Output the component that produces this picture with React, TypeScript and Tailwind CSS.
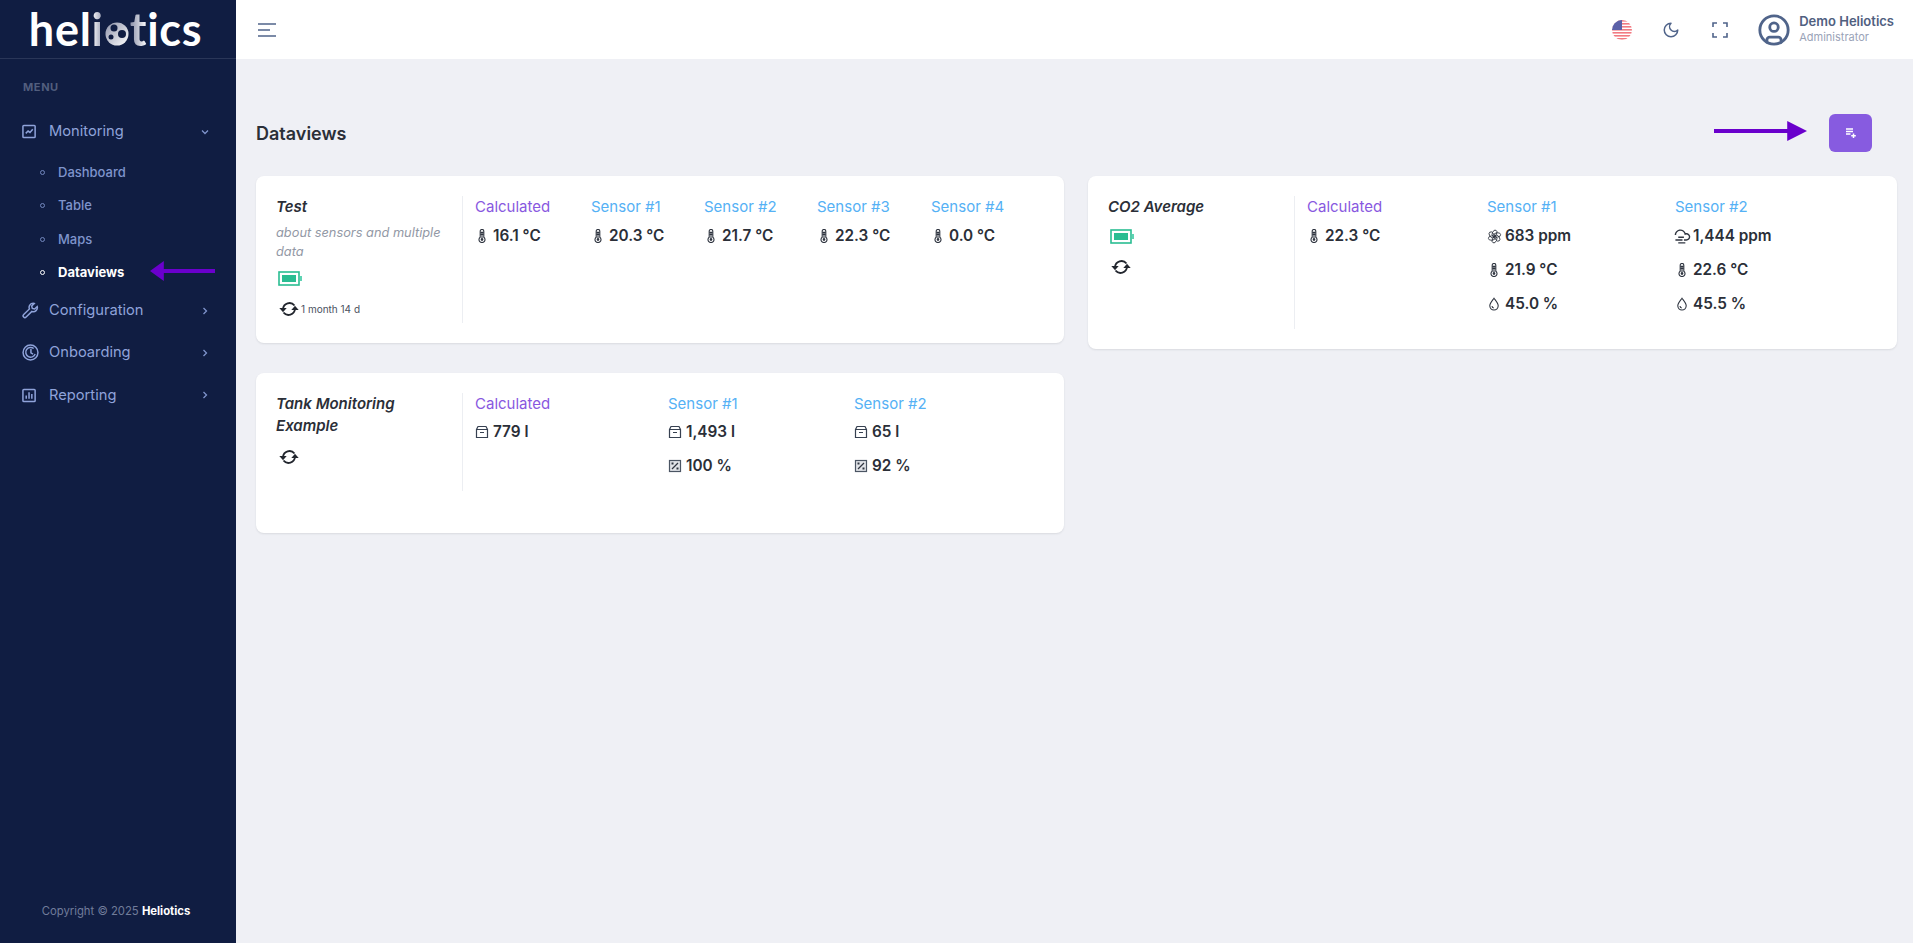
import { ReactNode } from "react";
import { RiCloudWindyLine } from "react-icons/ri";
import { LuCircleUser, LuMoon } from "react-icons/lu";

type Reading = { icon: ReactNode; value: string };
type Column = { label: string; accent?: boolean; readings: Reading[] };

const Thermo = (
  <svg viewBox="0 0 14 14" className="h-[14px] w-[14px] text-[#2f3540]" fill="none" stroke="currentColor" strokeWidth="1.1">
    <path d="M5.2 8.2V2.2a1.8 1.8 0 0 1 3.6 0v6a3 3 0 1 1-3.6 0z" />
    <path d="M7 4v6M5.4 3.4h3.2M5.4 5.4h3.2" />
    <circle cx="7" cy="10.6" r="1.3" fill="currentColor" stroke="none" />
  </svg>
);

const Drop = (
  <svg viewBox="0 0 14 14" className="h-[14px] w-[14px] text-[#2f3540]" fill="none" stroke="currentColor" strokeWidth="1.1">
    <path d="M7 1.2C5 4 2.8 6.2 2.8 8.8a4.2 4.2 0 0 0 8.4 0C11.2 6.2 9 4 7 1.2z" />
    <path d="M5 9a2.2 2.2 0 0 0 1.8 2" />
  </svg>
);

const Gas = (
  <svg viewBox="0 0 16 16" className="h-[15px] w-[15px] shrink-0 text-[#2f3540]" fill="none" stroke="currentColor" strokeWidth="0.9">
    {[0, 60, 120, 180, 240, 300].map((deg) => (
      <ellipse key={deg} cx="8" cy="4.6" rx="2.3" ry="3.6" transform={`rotate(${deg} 8 8) rotate(25 8 4.6)`} />
    ))}
  </svg>
);

const Cloud = <RiCloudWindyLine className="h-[17px] w-[17px] shrink-0 text-[#2f3540]" />;

const Tank = (
  <svg viewBox="0 0 14 14" className="h-[14px] w-[14px] text-[#374151]" fill="none" stroke="currentColor" strokeWidth="1.2">
    <path d="M3 1.5h8l1.5 3V12.5h-11V4.5z" />
    <path d="M1.5 4.5h11M5 7.5h4" />
  </svg>
);

const Percent = (
  <svg viewBox="0 0 14 14" className="h-[14px] w-[14px]" fill="#e2e4e8" stroke="#4b5563" strokeWidth="1.2">
    <rect x="1.5" y="1.5" width="11" height="11" />
    <path d="M4 10l6-6" stroke="#2f3540" />
    <rect x="3.5" y="3.5" width="2" height="2" fill="#2f3540" stroke="none" />
    <rect x="8.5" y="8.5" width="2" height="2" fill="#2f3540" stroke="none" />
  </svg>
);

function Metric({ col, top = "mt-[7px]" }: { col: Column; top?: string }) {
  return (
    <div>
      <p className={`text-[15px] leading-[22px] ${col.accent ? "text-[#8858e0]" : "text-[#55b1f5]"}`}>{col.label}</p>
      <div className={`${top} space-y-[12px]`}>
        {col.readings.map((r) => (
          <div key={r.value} className="flex h-[22px] items-center gap-[4px] text-[15.3px] font-[560] text-[#2b2f38]">
            <span className="flex w-[14px] justify-center">{r.icon}</span>
            {r.value}
          </div>
        ))}
      </div>
    </div>
  );
}

function SyncIcon() {
  return (
    <svg viewBox="0 0 20 16" className="h-[16px] w-[20px] shrink-0 text-[#22262e]" fill="currentColor">
      <path d="M4 8A6.5 6.5 0 0 1 15.5 4.5" fill="none" stroke="currentColor" strokeWidth="1.9" />
      <path d="M16 8A6.5 6.5 0 0 1 4.5 11.5" fill="none" stroke="currentColor" strokeWidth="1.9" />
      <path d="M0.3 7h7.4L4 11.2z" />
      <path d="M12.3 9h7.4L16 4.8z" />
    </svg>
  );
}

function BatteryIcon({ className }: { className: string }) {
  return (
    <svg viewBox="0 0 24 15" className={`block h-[15px] w-[24px] ${className}`}>
      <rect x="1" y="1" width="20" height="13" fill="none" stroke="#2abd92" strokeWidth="1.6" />
      <rect x="4" y="4" width="14" height="7" fill="#2abd92" />
      <rect x="22" y="5" width="2" height="5" fill="#5fd3b3" />
    </svg>
  );
}

function Card({ children }: { children: ReactNode }) {
  return <div className="rounded-lg bg-white p-5 shadow-[0_1px_2px_rgba(56,65,74,0.12)]">{children}</div>;
}

const SideIcon = {
  chart: (
    <svg viewBox="0 0 16 16" className="h-[15px] w-[15px]" fill="none" stroke="currentColor" strokeWidth="1.6">
      <rect x="1" y="1.5" width="13" height="13" rx="1" />
      <path d="M4 10l2.5-2.5 2 1.5 3-3.5" />
    </svg>
  ),
  wrench: (
    <svg viewBox="0 0 16 16" className="h-[17px] w-[17px]" fill="none" stroke="currentColor" strokeWidth="1.4">
      <path d="M10.5 1.2a3.8 3.8 0 0 0-3.5 5.3L1.6 11.8a1.6 1.6 0 0 0 2.3 2.4l5.4-5.3a3.8 3.8 0 0 0 5-4.6l-2.4 2.3-2.2-.6-.6-2.2 2.4-2.4c-.3-.1-.6-.2-1-.2z" />
    </svg>
  ),
  coin: (
    <svg viewBox="0 0 16 16" className="h-[17px] w-[17px]" fill="none" stroke="currentColor" strokeWidth="1.4">
      <circle cx="8" cy="8" r="7" />
      <path d="M11 4.2A4.6 4.6 0 1 0 12.4 9.5" />
      <path d="M8.4 4.8v3.6l2 1.2" />
    </svg>
  ),
  bars: (
    <svg viewBox="0 0 16 16" className="h-[15px] w-[15px]" fill="none" stroke="currentColor" strokeWidth="1.6">
      <rect x="1" y="1.5" width="13" height="13" rx="1" />
      <path d="M4.5 11.5V8M7.5 11.5V4.5M10.5 11.5V6.5" />
    </svg>
  ),
};

function NavRow({ icon, label, open, h }: { icon: ReactNode; label: string; open?: boolean; h: string }) {
  return (
    <div className={`flex items-center pl-[22px] pr-[26px] ${h}`}>
      <span className="flex w-[27px] text-[#8fa3da]">{icon}</span>
      <span className="flex-1 text-[14.7px] text-[#8fa3da]">{label}</span>
      <svg viewBox="0 0 10 10" className="h-[10px] w-[10px] text-[#7f94cc]" fill="none" stroke="currentColor" strokeWidth="1.3">
        <path d={open ? "M2 3.5l3 3 3-3" : "M3.5 2l3 3-3 3"} />
      </svg>
    </div>
  );
}

function SubRow({ label, active }: { label: string; active?: boolean }) {
  return (
    <div className="flex h-[33.5px] items-center pl-[40px]">
      <span className={`h-[5px] w-[5px] rounded-full border ${active ? "border-white" : "border-[#7287bd]"}`} />
      <span className={`ml-[13px] text-[13px] ${active ? "font-bold text-white" : "font-medium text-[#7f94cc]"}`}>{label}</span>
    </div>
  );
}

function Logo() {
  return (
    <div className="flex h-[59px] items-center justify-center border-b border-[#2a3658] pr-[5px] font-['Lato',sans-serif] text-[45px] leading-none font-bold tracking-[0.7px] text-white">
      <span>hel</span>
      <span className="bg-gradient-to-r from-white to-[#8b90a8] bg-clip-text text-transparent">i</span>
      <svg viewBox="0 0 24 24" className="mx-[1px] mt-[9px] h-[24px] w-[24px]">
        <defs>
          <linearGradient id="sphere" x1="0" x2="1" y1="0" y2="1">
            <stop offset="0" stopColor="#8e93aa" />
            <stop offset="1" stopColor="#ffffff" />
          </linearGradient>
        </defs>
        <circle cx="12" cy="12" r="11.5" fill="url(#sphere)" />
        <circle cx="9" cy="6" r="3.5" fill="#101d42" />
        <circle cx="17" cy="12" r="4" fill="#101d42" />
        <circle cx="6" cy="15" r="2.5" fill="#101d42" />
      </svg>
      <span className="bg-gradient-to-r from-[#8b90a8] to-white bg-clip-text text-transparent">t</span>
      <span>ics</span>
    </div>
  );
}

function Flag() {
  return (
    <svg viewBox="0 0 20 20" className="h-[20px] w-[20px] overflow-hidden rounded-full">
      <rect width="20" height="20" fill="#fff" />
      {[0, 3, 6, 9, 12, 15, 18].map((y) => (
        <rect key={y} y={y} width="20" height="1.6" fill="#f27a82" />
      ))}
      <rect width="10" height="10" fill="#5b61a8" />
    </svg>
  );
}

function Arrow({ dir, className }: { dir: "left" | "right"; className: string }) {
  return (
    <svg viewBox="0 0 94 20" preserveAspectRatio="none" className={className}>
      <path d={dir === "right" ? "M0 8h74V0l20 10-20 10v-8H0z" : "M94 8H20V0L0 10l20 10v-8h74z"} fill="#6a00cc" />
    </svg>
  );
}

export default function App() {
  const t = (value: string) => ({ icon: Thermo, value });

  return (
    <div className="relative flex h-[943px] w-full overflow-hidden bg-[#eff0f5] font-['Inter',sans-serif]">
      <aside className="flex w-[236px] shrink-0 flex-col bg-[#101d42]">
        <Logo />
        <p className="mt-[20px] pl-[23px] text-[11px] font-bold tracking-[0.6px] text-[#525e7e]">MENU</p>
        <div className="mt-[14px]">
          <NavRow icon={SideIcon.chart} label="Monitoring" open h="h-[44px]" />
          <div className="mt-[2px]">
            <SubRow label="Dashboard" />
            <SubRow label="Table" />
            <SubRow label="Maps" />
            <SubRow label="Dataviews" active />
          </div>
          <NavRow icon={SideIcon.wrench} label="Configuration" h="h-[42px]" />
          <NavRow icon={SideIcon.coin} label="Onboarding" h="h-[42px]" />
          <NavRow icon={SideIcon.bars} label="Reporting" h="h-[43px]" />
        </div>
        <p className="mt-auto mb-[23px] pr-[4px] text-center text-[11.3px] text-[#717c9a]">
          Copyright © 2025 <span className="font-bold text-white">Heliotics</span>
        </p>
      </aside>

      <div className="flex min-w-0 flex-1 flex-col">
        <header className="flex h-[59px] items-center justify-between bg-white pr-[19px] pl-[22px]">
          <svg viewBox="0 0 18 14" className="h-[14px] w-[18px]" fill="none" stroke="#50648a" strokeWidth="1.6">
            <path d="M0 1h18M0 7h12M0 13h18" />
          </svg>
          <div className="flex items-center">
            <Flag />
            <LuMoon className="ml-[30px] h-[18px] w-[18px] text-[#50648a]" />
            <svg viewBox="0 0 16 16" className="ml-[32px] h-[16px] w-[16px]" fill="none" stroke="#50648a" strokeWidth="1.6">
              <path d="M1 5V1h4M11 1h4v4M15 11v4h-4M5 15H1v-4" />
            </svg>
            <LuCircleUser className="ml-[29px] h-[34px] w-[34px] text-[#50648a]" />
            <div className="mb-[2px] ml-[8px]">
              <p className="text-[13px] leading-[17px] font-semibold text-[#50607f]">Demo Heliotics</p>
              <p className="text-[11px] leading-[15px] text-[#9aa3b8]">Administrator</p>
            </div>
          </div>
        </header>

        <main className="flex-1 pt-[55px] pr-[16px] pl-[20px]">
          <div className="flex h-[38px] items-center justify-between pr-[25px]">
            <h1 className="mt-[2px] text-lg font-semibold text-[#2b2f38]">Dataviews</h1>
            <button className="flex h-[38px] w-[43px] items-center justify-center rounded-md bg-[#875be0]">
              <svg viewBox="0 0 12 12" className="h-[12px] w-[12px]" fill="none" stroke="#fff" strokeWidth="1.5">
                <path d="M1 2h7M1 4.5h7M1 7h4.5M8.5 6.5v4.5M6.2 8.8h4.6" />
              </svg>
            </button>
          </div>

          <div className="mt-[24px] grid grid-cols-[808px_1fr] items-start gap-x-[24px]">
            <div className="flex flex-col gap-[30px]">
              <Card>
                <div className="flex h-[127px]">
                  <div className="w-[187px] border-r border-[#eceef2] pr-3">
                    <p className="text-[15px] leading-[22px] font-semibold text-[#2b2f38] italic">Test</p>
                    <p className="mt-[5px] text-[12.8px] leading-[19px] text-[#9298a5] italic">about sensors and multiple data</p>
                    <BatteryIcon className="mt-[10px] ml-[2px]" />
                    <div className="mt-[15px] ml-[3px] flex items-center gap-[2px]">
                      <SyncIcon />
                      <span className="text-[10px] text-[#4b5160]">1 month 14 d</span>
                    </div>
                  </div>
                  <div className="grid flex-1 grid-cols-[116px_113px_113px_114px_1fr] pl-[12px]">
                    <Metric col={{ label: "Calculated", accent: true, readings: [t("16.1 °C")] }} />
                    <Metric col={{ label: "Sensor #1", readings: [t("20.3 °C")] }} />
                    <Metric col={{ label: "Sensor #2", readings: [t("21.7 °C")] }} />
                    <Metric col={{ label: "Sensor #3", readings: [t("22.3 °C")] }} />
                    <Metric col={{ label: "Sensor #4", readings: [t("0.0 °C")] }} />
                  </div>
                </div>
              </Card>

              <Card>
                <div className="mb-[22px] flex h-[98px]">
                  <div className="w-[187px] border-r border-[#eceef2] pr-3">
                    <p className="text-[15px] leading-[22px] font-semibold text-[#2b2f38] italic">Tank Monitoring Example</p>
                    <div className="mt-[12px] ml-[3px]"><SyncIcon /></div>
                  </div>
                  <div className="grid flex-1 grid-cols-[193px_186px_1fr] pl-[12px]">
                    <Metric top="mt-[6px]" col={{ label: "Calculated", accent: true, readings: [{ icon: Tank, value: "779 l" }] }} />
                    <Metric top="mt-[6px]" col={{ label: "Sensor #1", readings: [{ icon: Tank, value: "1,493 l" }, { icon: Percent, value: "100 %" }] }} />
                    <Metric top="mt-[6px]" col={{ label: "Sensor #2", readings: [{ icon: Tank, value: "65 l" }, { icon: Percent, value: "92 %" }] }} />
                  </div>
                </div>
              </Card>
            </div>

            <Card>
              <div className="flex h-[133px]">
                <div className="w-[187px] border-r border-[#eceef2] pr-3">
                  <p className="text-[15px] leading-[22px] font-semibold text-[#2b2f38] italic">CO2 Average</p>
                  <BatteryIcon className="mt-[11px] ml-[2px]" />
                  <div className="mt-[15px] ml-[3px]"><SyncIcon /></div>
                </div>
                <div className="grid flex-1 grid-cols-[180px_188px_1fr] pl-[12px]">
                  <Metric col={{ label: "Calculated", accent: true, readings: [t("22.3 °C")] }} />
                  <Metric col={{ label: "Sensor #1", readings: [{ icon: Gas, value: "683 ppm" }, t("21.9 °C"), { icon: Drop, value: "45.0 %" }] }} />
                  <Metric col={{ label: "Sensor #2", readings: [{ icon: Cloud, value: "1,444 ppm" }, t("22.6 °C"), { icon: Drop, value: "45.5 %" }] }} />
                </div>
              </div>
            </Card>
          </div>
        </main>
      </div>

      <Arrow dir="left" className="absolute top-[261px] left-[150px] h-[20px] w-[65px]" />
      <Arrow dir="right" className="absolute top-[121px] left-[1714px] h-[20px] w-[93px]" />
    </div>
  );
}
